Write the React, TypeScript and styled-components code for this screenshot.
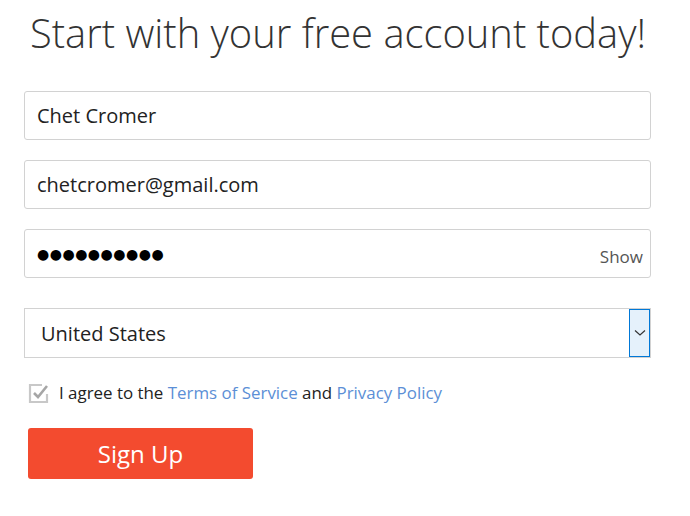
import styled, { createGlobalStyle } from "styled-components"

const GlobalStyle = createGlobalStyle`
  html, body {
    margin: 0;
    padding: 0;
    background: #fff;
  }
  body {
    font-family: "Open Sans", "Liberation Sans", sans-serif;
    color: #222;
  }
`

const App = () => {
  return (
    <>
      <GlobalStyle />
      <Page>
        <Title>Start with your free account today!</Title>
        <Form>
          <Field>
            <FieldText>Chet Cromer</FieldText>
          </Field>
          <Field>
            <FieldText>chetcromer@gmail.com</FieldText>
          </Field>
          <Field>
            <Dots>●●●●●●●●●●</Dots>
            <ShowToggle>Show</ShowToggle>
          </Field>
          <SelectBox>
            <SelectText>United States</SelectText>
            <SelectArrow>
              <svg width="12" height="8" viewBox="0 0 12 8">
                <path d="M1 1.5 L6 6 L11 1.5" fill="none" stroke="#333" strokeWidth="1.2" />
              </svg>
            </SelectArrow>
          </SelectBox>
          <AgreeRow>
            <CheckBox>
              <svg width="22" height="22" viewBox="0 0 22 22">
                <path d="M14 3 H2 V20 H19 V12" fill="none" stroke="#c8c8c8" strokeWidth="2.2" />
                <path d="M6 11 L10 15 L19 4" fill="none" stroke="#a6a6a6" strokeWidth="2.6" />
              </svg>
            </CheckBox>
            <AgreeText>
              I agree to the <Link>Terms of Service</Link> and <Link>Privacy Policy</Link>
            </AgreeText>
          </AgreeRow>
          <SignUpButton>Sign Up</SignUpButton>
        </Form>
      </Page>
    </>
  )
}

export default App

const Page = styled.div`
  width: 690px;
  height: 516px;
  padding: 6px 39px 0 24px;
  box-sizing: border-box;
`

const Title = styled.h1`
  margin: 0 0 0 6px;
  font-family: "Open Sans", sans-serif;
  font-weight: 300;
  font-size: 39.9px;
  line-height: 54px;
  color: #333;
  white-space: nowrap;
`

const Form = styled.div`
  margin-top: 31px;
  display: flex;
  flex-direction: column;
`

const Field = styled.div`
  height: 49px;
  box-sizing: border-box;
  border: 1px solid #d2d2d2;
  border-radius: 3px;
  margin-bottom: 20px;
  display: flex;
  align-items: center;
  padding: 0 7px 0 12px;
`

const FieldText = styled.span`
  font-size: 20px;
  color: #222;
`

const Dots = styled.span`
  font-family: "DejaVu Sans", sans-serif;
  font-size: 14px;
  letter-spacing: 0.5px;
  color: #000;
`

const ShowToggle = styled.span`
  margin-left: auto;
  margin-top: 6px;
  font-size: 17px;
  color: #555;
`

const SelectBox = styled.div`
  margin-top: 10px;
  height: 50px;
  box-sizing: border-box;
  border: 1px solid #d2d2d2;
  display: flex;
  align-items: center;
  padding-left: 16px;
`

const SelectText = styled.span`
  font-size: 20px;
  color: #222;
`

const SelectArrow = styled.div`
  margin-left: auto;
  width: 21px;
  height: 48px;
  box-sizing: border-box;
  border: 1px solid #0078d7;
  background: #e5f1fb;
  display: flex;
  align-items: center;
  justify-content: center;
`

const AgreeRow = styled.div`
  margin-top: 23px;
  margin-left: 4px;
  display: flex;
  align-items: center;
  gap: 9px;
`

const CheckBox = styled.span`
  display: flex;
  width: 22px;
  height: 22px;
`

const AgreeText = styled.span`
  font-size: 16.9px;
  color: #222;
`

const Link = styled.a`
  color: #5c8fd6;
  text-decoration: none;
  cursor: pointer;
`

const SignUpButton = styled.button`
  margin-top: 24px;
  margin-left: 4px;
  width: 225px;
  height: 51px;
  border: none;
  border-radius: 3px;
  background: #f34b2f;
  color: #fff;
  font-family: "Open Sans", sans-serif;
  font-size: 24px;
  cursor: pointer;
`
